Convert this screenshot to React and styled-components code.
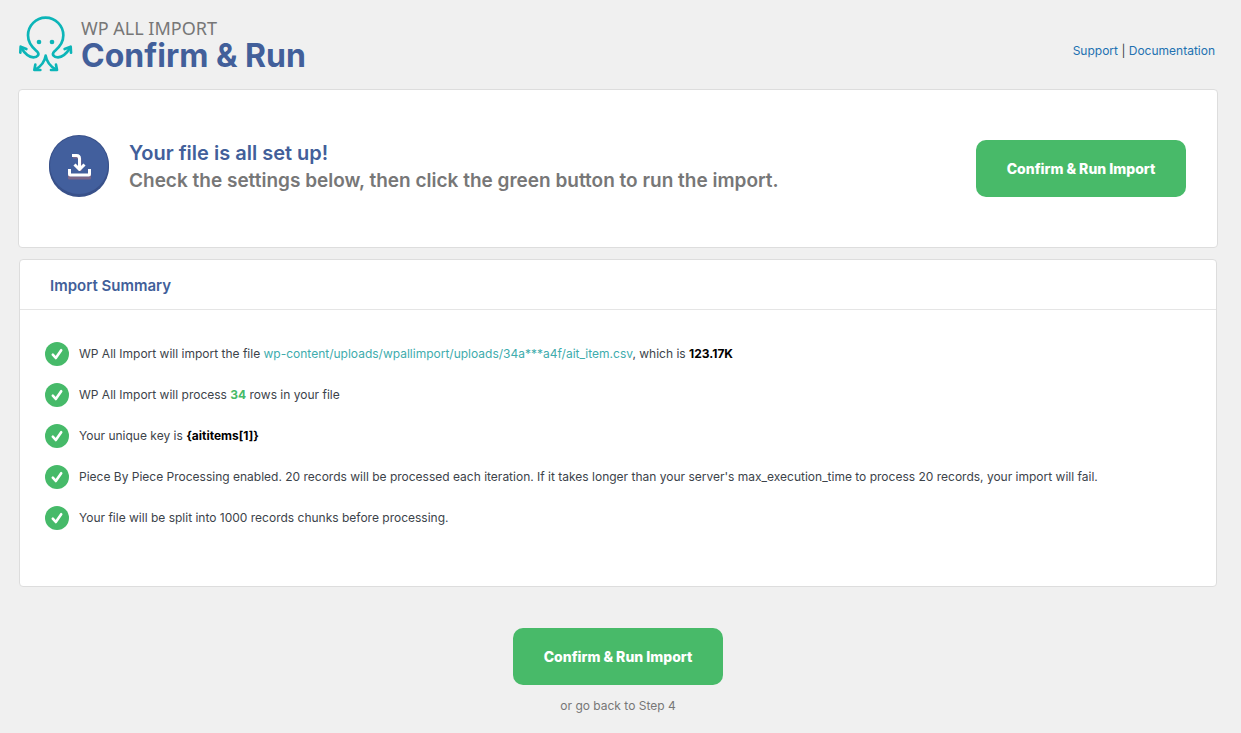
import styled, { createGlobalStyle } from "styled-components";

const GlobalStyle = createGlobalStyle`
  body {
    margin: 0;
    background: #f0f0f0;
    color: #3c434a;
    font-family: Inter, "Liberation Sans", sans-serif;
    font-size: 12px;
    line-height: 20px;
  }
`;

const Page = styled.div`
  padding: 15px 23px 16px 18px;
`;

const Header = styled.header`
  display: flex;
  align-items: center;
  height: 58px;
  padding-left: 1px;
  margin-bottom: 16px;
`;

const Logo = styled.svg`
  width: 54px;
  height: 56px;
  margin-right: 8px;
  flex-shrink: 0;
`;

const Brand = styled.p`
  margin: 0;
  color: #777777;
  font-family: "Noto Sans", sans-serif;
  font-size: 18px;
  line-height: 24px;
`;

const Title = styled.h1`
  margin: 0;
  color: #425f9a;
  font-size: 32px;
  font-weight: 700;
  line-height: 32px;
`;

const HelpLinks = styled.nav`
  margin: 14px 3px 0 auto;
`;

const HelpLink = styled.a`
  color: #2271b1;
  text-decoration: none;
`;

const Panel = styled.section`
  box-sizing: border-box;
  background: white;
  border: 1px solid #dddddd;
  border-radius: 4px;
`;

const ReadyPanel = styled(Panel)`
  display: flex;
  align-items: center;
  padding: 45px 31px 50px 30px;
`;

const ImportIcon = styled.svg`
  width: 60px;
  height: 62px;
  margin-right: 20px;
  flex-shrink: 0;
`;

const ReadyText = styled.div`
  padding-top: 2px;
  font-weight: 600;
  line-height: 28px;
`;

const ReadyTitle = styled.h2`
  margin: 0;
  color: #425f9a;
  font-size: 20px;
  font-weight: 600;
`;

const ReadyHint = styled.p`
  margin: 0;
  color: #777777;
  font-size: 19px;
`;

const RunButton = styled.button`
  width: 210px;
  height: 57px;
  padding: 0;
  border: 0;
  border-radius: 10px;
  background: #48ba69;
  color: white;
  font-family: inherit;
  font-size: 14px;
  font-weight: 800;
  cursor: pointer;
`;

const ReadyAction = styled.div`
  padding-top: 5px;
  margin-left: auto;
`;

const SummaryPanel = styled(Panel)`
  margin: 11px 1px 41px;
`;

const SummaryTitle = styled.h3`
  margin: 0;
  padding: 16px 30px 13px;
  border-bottom: 1px solid #e5e5e5;
  color: #425f9a;
  font-size: 15px;
  font-weight: 600;
  line-height: 20px;
`;

const SummaryList = styled.ul`
  display: flex;
  flex-direction: column;
  gap: 17px;
  margin: 0;
  padding: 32px 25px 56px;
  list-style: none;
`;

const SummaryItem = styled.li`
  display: flex;
  align-items: center;
`;

const Check = styled.svg`
  width: 24px;
  height: 24px;
  margin-right: 10px;
  flex-shrink: 0;
`;

const FileLink = styled.a`
  color: #40acad;
  text-decoration: none;
`;

const Strong = styled.strong`
  color: black;
`;

const Count = styled.strong`
  color: #46ba69;
`;

const Footer = styled.footer`
  display: flex;
  flex-direction: column;
  align-items: center;
  gap: 11px;
`;

const BackLink = styled.a`
  color: #777777;
  text-decoration: none;
`;

const Octopus = () => (
  <Logo
    viewBox="27 23 162 168"
    fill="none"
    stroke="#0cb5b8"
    strokeWidth="8"
    strokeLinecap="round"
    strokeLinejoin="round"
    aria-hidden="true"
  >
    <path d="M34 119 C42 132 53 146 70 147 C83 147 90 138 81 129 C74 123 54 110 54 81 A53 53 0 0 1 160 81 C160 110 140 123 133 129 C124 138 131 147 144 147 C161 146 172 132 180 119" />
    <path d="M31 133 L32 115 L49 122 M164 122 L182 115 L183 133" />
    <path d="M107 142 C104 162 95 173 76 184 M107 142 C110 162 119 173 138 184" />
    <path d="M76 169 L73 185 L91 185 M138 169 L141 185 L123 185" />
    <g fill="#0cb5b8" stroke="none">
      <circle cx="87" cy="101" r="7" />
      <circle cx="126" cy="101" r="7" />
    </g>
  </Logo>
);

const Download = () => (
  <ImportIcon viewBox="0 0 60 62" fill="none" aria-hidden="true">
    <circle cx="30" cy="32" r="30" fill="#39518a" />
    <circle cx="30" cy="30" r="30" fill="#39518a" />
    <circle cx="30" cy="30" r="29" fill="#425f9d" />
    <g strokeWidth="3" strokeLinejoin="round">
      <path
        d="M20.5 37 V43 H40.5 V37 M24 22 H28 Q31 22 31 25 V36"
        stroke="#7c6788"
      />
      <path
        d="M20.5 34 V39 Q20.5 40 21.5 40 H39.5 Q40.5 40 40.5 39 V34"
        stroke="white"
      />
      <path d="M23 20.5 H27.5 Q30.5 20.5 30.5 23.5 V34" stroke="white" />
      <path d="M25.5 29.5 L30.5 34.5 L35.5 29.5" stroke="white" />
    </g>
  </ImportIcon>
);

const CheckIcon = () => (
  <Check viewBox="0 0 24 24" fill="none" aria-hidden="true">
    <circle cx="12" cy="12" r="12" fill="#46ba69" />
    <path
      d="M7.8 12.6 L10.8 16 L16.2 8.2"
      stroke="white"
      strokeWidth="2.6"
      strokeLinecap="round"
      strokeLinejoin="round"
    />
  </Check>
);

const SummaryRow = ({ children }) => (
  <SummaryItem>
    <CheckIcon />
    <span>{children}</span>
  </SummaryItem>
);

const App = () => (
  <Page>
    <GlobalStyle />
    <Header>
      <Octopus />
      <div>
        <Brand>WP ALL IMPORT</Brand>
        <Title>Confirm &amp; Run</Title>
      </div>
      <HelpLinks>
        <HelpLink href="#support">Support</HelpLink> |{" "}
        <HelpLink href="#documentation">Documentation</HelpLink>
      </HelpLinks>
    </Header>

    <ReadyPanel>
      <Download />
      <ReadyText>
        <ReadyTitle>Your file is all set up!</ReadyTitle>
        <ReadyHint>
          Check the settings below, then click the green button to run the
          import.
        </ReadyHint>
      </ReadyText>
      <ReadyAction>
        <RunButton type="button">Confirm &amp; Run Import</RunButton>
      </ReadyAction>
    </ReadyPanel>

    <SummaryPanel>
      <SummaryTitle>Import Summary</SummaryTitle>
      <SummaryList>
        <SummaryRow>
          WP All Import will import the file{" "}
          <FileLink href="#file">
            wp-content/uploads/wpallimport/uploads/34a***a4f/ait_item.csv
          </FileLink>
          , which is <Strong>123.17K</Strong>
        </SummaryRow>
        <SummaryRow>
          WP All Import will process <Count>34</Count> rows in your file
        </SummaryRow>
        <SummaryRow>
          Your unique key is <Strong>{"{aititems[1]}"}</Strong>
        </SummaryRow>
        <SummaryRow>
          Piece By Piece Processing enabled. 20 records will be processed each
          iteration. If it takes longer than your server's max_execution_time
          to process 20 records, your import will fail.
        </SummaryRow>
        <SummaryRow>
          Your file will be split into 1000 records chunks before processing.
        </SummaryRow>
      </SummaryList>
    </SummaryPanel>

    <Footer>
      <RunButton type="button">Confirm &amp; Run Import</RunButton>
      <BackLink href="#step-4">or go back to Step 4</BackLink>
    </Footer>
  </Page>
);

export default App;
